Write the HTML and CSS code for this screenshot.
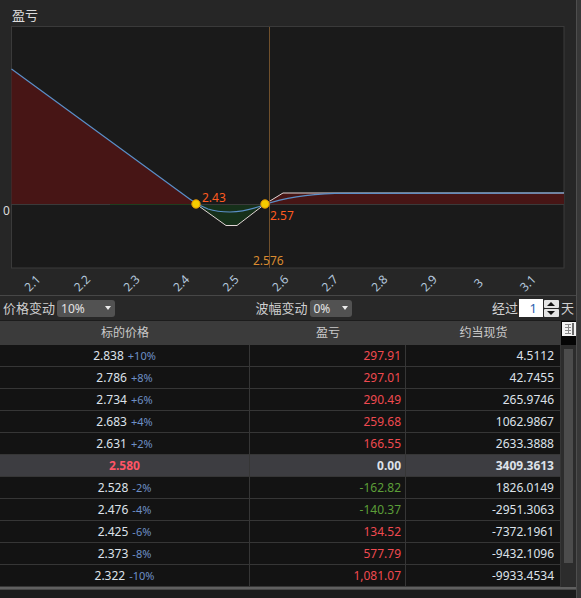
FILE: index.html
```html
<!DOCTYPE html>
<html lang="zh-CN">
<head>
<meta charset="utf-8">
<title>盈亏</title>
<link rel="stylesheet" href="styles.css">
</head>
<body>
<div class="app">
  <section class="chart-panel">
    <div class="chart-title">盈亏</div>
    <svg class="chart" width="576" height="269" viewBox="0 26 576 269" xmlns="http://www.w3.org/2000/svg">
      <rect x="11.5" y="26.5" width="552.5" height="241.5" fill="#1a1a1a" stroke="#3a3a3a" stroke-width="1"/>
      <path d="M11.5,69 L196,204 L11.5,204 Z" fill="#471515"/>
      <path d="M265,204 L283,193 L564,193 L564,204 Z" fill="#471515"/>
      <path d="M196,204 L226,225.5 L237,225.5 L265,204 Z" fill="#16301a"/>
      <line x1="11.5" y1="204.5" x2="564" y2="204.5" stroke="#3a3a3a" stroke-width="1"/>
      <line x1="110" y1="204.5" x2="196" y2="204.5" stroke="#1f3d1f" stroke-width="1"/>
      <path d="M196,204 L226,225.5 L237,225.5 L265,204 L283,193 L564,193" fill="none" stroke="#e2d6d6" stroke-width="1"/>
      <path d="M11.5,69 L190,199.2 C195,203 201,206.5 208,209 C215,211.3 222,212 230,212 C244,211.5 255,208.2 265,204.5 C283,198 303,194.2 335,193.3 L564,193" fill="none" stroke="#5b8fc8" stroke-width="1.2"/>
      <line x1="269.5" y1="27" x2="269.5" y2="268" stroke="#70502c" stroke-width="1"/>
      <circle cx="196" cy="204" r="4.2" fill="#f6cc00" stroke="#e09200" stroke-width="1"/>
      <circle cx="265" cy="204" r="4.2" fill="#f6cc00" stroke="#e09200" stroke-width="1"/>
      <text class="lab-be" x="202" y="202">2.43</text>
      <text class="lab-be" x="270" y="220">2.57</text>
      <text class="lab-cur" x="253" y="265">2.576</text>
      <text class="lab-zero" x="3" y="215">0</text>
      <g class="axis">
        <text x="32.3" y="283" transform="rotate(-45 32.3 283)">2.1</text>
        <text x="81.9" y="283" transform="rotate(-45 81.9 283)">2.2</text>
        <text x="131.4" y="283" transform="rotate(-45 131.4 283)">2.3</text>
        <text x="181" y="283" transform="rotate(-45 181 283)">2.4</text>
        <text x="230.5" y="283" transform="rotate(-45 230.5 283)">2.5</text>
        <text x="280.1" y="283" transform="rotate(-45 280.1 283)">2.6</text>
        <text x="329.6" y="283" transform="rotate(-45 329.6 283)">2.7</text>
        <text x="379.2" y="283" transform="rotate(-45 379.2 283)">2.8</text>
        <text x="428.7" y="283" transform="rotate(-45 428.7 283)">2.9</text>
        <text x="478.3" y="283" transform="rotate(-45 478.3 283)">3</text>
        <text x="527.8" y="283" transform="rotate(-45 527.8 283)">3.1</text>
      </g>
    </svg>
  </section>

  <div class="controls">
    <div class="ctl">
      <span class="lbl">价格变动</span>
      <div class="select"><span>10%</span><i class="caret"></i></div>
    </div>
    <div class="ctl">
      <span class="lbl">波幅变动</span>
      <div class="select narrow"><span>0%</span><i class="caret"></i></div>
    </div>
    <div class="ctl right">
      <span class="lbl">经过</span>
      <div class="spin-input">1</div>
      <div class="spin">
        <div class="spin-btn"><i class="tri-up"></i></div>
        <div class="spin-btn"><i class="tri-down"></i></div>
      </div>
      <span class="lbl day">天</span>
    </div>
  </div>

  <div class="table">
    <div class="grid">
      <div class="thead"><div>标的价格</div><div>盈亏</div><div>约当现货</div></div>
      <div class="row"><div class="c1">2.838<span class="pct">+10%</span></div><div class="c2 red">297.91</div><div class="c3">4.5112</div></div>
      <div class="row"><div class="c1">2.786<span class="pct">+8%</span></div><div class="c2 red">297.01</div><div class="c3">42.7455</div></div>
      <div class="row"><div class="c1">2.734<span class="pct">+6%</span></div><div class="c2 red">290.49</div><div class="c3">265.9746</div></div>
      <div class="row"><div class="c1">2.683<span class="pct">+4%</span></div><div class="c2 red">259.68</div><div class="c3">1062.9867</div></div>
      <div class="row"><div class="c1">2.631<span class="pct">+2%</span></div><div class="c2 red">166.55</div><div class="c3">2633.3888</div></div>
      <div class="row hl"><div class="c1">2.580</div><div class="c2">0.00</div><div class="c3">3409.3613</div></div>
      <div class="row"><div class="c1">2.528<span class="pct">-2%</span></div><div class="c2 green">-162.82</div><div class="c3">1826.0149</div></div>
      <div class="row"><div class="c1">2.476<span class="pct">-4%</span></div><div class="c2 green">-140.37</div><div class="c3">-2951.3063</div></div>
      <div class="row"><div class="c1">2.425<span class="pct">-6%</span></div><div class="c2 red">134.52</div><div class="c3">-7372.1961</div></div>
      <div class="row"><div class="c1">2.373<span class="pct">-8%</span></div><div class="c2 red">577.79</div><div class="c3">-9432.1096</div></div>
      <div class="row"><div class="c1">2.322<span class="pct">-10%</span></div><div class="c2 red">1,081.07</div><div class="c3">-9933.4534</div></div>
    </div>
    <div class="vscroll">
      <div class="corner">
        <svg width="14" height="14" viewBox="0 0 14 14" xmlns="http://www.w3.org/2000/svg">
          <rect x="0" y="0" width="14" height="14" fill="#f2f2f2"/>
          <rect x="10" y="1" width="2" height="12" fill="#6a6a6a"/>
          <rect x="3" y="2" width="6" height="1" fill="#8a8a8a"/>
          <rect x="3" y="5" width="6" height="1" fill="#8a8a8a"/>
          <rect x="3" y="8" width="6" height="1" fill="#8a8a8a"/>
          <rect x="3" y="11" width="6" height="1" fill="#8a8a8a"/>
          <rect x="6" y="2" width="1" height="10" fill="#8a8a8a"/>
        </svg>
      </div>
      <div class="track"><div class="thumb"></div></div>
    </div>
  </div>
  <div class="foot"></div>
  <div class="below"></div>
</div>
</body>
</html>
```

FILE: styles.css
```css
html, body {
  margin: 0;
  padding: 0;
}
body {
  width: 581px;
  height: 598px;
  overflow: hidden;
  background: #383838;
  font-family: "Noto Sans", "Noto Sans CJK SC", sans-serif;
}
.app {
  width: 576px;
  border-right: 1px solid #4e4e4e;
  background: #262626;
}
.chart-panel {
  height: 295px;
  border-bottom: 1px solid #474747;
}
.chart-title {
  height: 26px;
  box-sizing: border-box;
  padding: 3px 0 0 12px;
  font-size: 13px;
  line-height: 24px;
  color: #dcdcdc;
}
.chart {
  display: block;
}
.chart text {
  font-family: "Noto Sans", "Noto Sans CJK SC", sans-serif;
  font-size: 12px;
}
.lab-be { fill: #ff5a20; }
.lab-cur { fill: #d98b30; }
.lab-zero { fill: #dcdcdc; }
.axis text {
  fill: #b4c8de;
  text-anchor: middle;
  dominant-baseline: central;
}

.controls {
  height: 24px;
  display: flex;
  align-items: center;
  justify-content: space-between;
  padding: 0 2px 0 3px;
  border-bottom: 1px solid #1c1c1c;
  background: #282828;
}
.ctl {
  display: flex;
  align-items: center;
  gap: 2px;
}
.ctl.right { gap: 1px; }
.lbl {
  font-size: 13px;
  color: #cfcfcf;
  line-height: 18px;
}
.day { margin-left: 1px; }
.select {
  width: 58px;
  height: 17px;
  box-sizing: border-box;
  background: #525252;
  border-radius: 3px;
  display: flex;
  align-items: center;
  justify-content: space-between;
  padding: 0 4px;
  font-size: 12px;
  color: #e2e2e2;
}
.select.narrow { width: 42px; }
.caret {
  width: 0;
  height: 0;
  border-left: 3.5px solid transparent;
  border-right: 3.5px solid transparent;
  border-top: 4px solid #ececec;
}
.spin-input {
  width: 24px;
  height: 18px;
  box-sizing: border-box;
  background: #ffffff;
  color: #2a5fb0;
  font-size: 13px;
  line-height: 18px;
  text-align: right;
  padding-right: 6px;
}
.spin {
  width: 15px;
  height: 17px;
  display: flex;
  flex-direction: column;
  gap: 1px;
}
.spin-btn {
  flex: 1;
  background: #e4e4e4;
  border-radius: 1px;
  display: flex;
  align-items: center;
  justify-content: center;
}
.tri-up {
  width: 0; height: 0;
  border-left: 4px solid transparent;
  border-right: 4px solid transparent;
  border-bottom: 4px solid #111;
}
.tri-down {
  width: 0; height: 0;
  border-left: 4px solid transparent;
  border-right: 4px solid transparent;
  border-top: 4px solid #111;
}

.table {
  display: flex;
  background: #131313;
}
.grid {
  width: 561px;
}
.thead {
  display: grid;
  grid-template-columns: 250px 156px 155px;
  height: 24px;
  background: #3b3b3b;
}
.thead div {
  text-align: center;
  line-height: 24px;
  font-size: 12px;
  color: #cacaca;
}
.row {
  display: grid;
  grid-template-columns: 250px 156px 155px;
  height: 21px;
  border-bottom: 1px solid #363636;
  background: #131313;
  font-size: 12px;
  line-height: 22px;
  color: #dde2ea;
}
.row > div {
  border-right: 1px solid #363636;
  white-space: nowrap;
}
.c1 { text-align: center; }
.pct {
  font-size: 11px;
  color: #6d8fc6;
  margin-left: 4px;
}
.c2 { text-align: right; padding-right: 4px; }
.c3 { text-align: right; padding-right: 6px; }
.red { color: #f04a50; }
.green { color: #5c9e38; }
.row.hl {
  background: #3d3d41;
  font-weight: bold;
}
.row.hl .c1 { color: #ff5566; }

.vscroll {
  width: 15px;
  display: flex;
  flex-direction: column;
}
.corner {
  height: 24px;
  box-sizing: border-box;
  padding: 1px 0 0 1px;
  background: #050505;
}
.corner svg { display: block; }
.track {
  flex: 1;
  background: #2c2c2c;
  padding: 4px 3px 0 3px;
}
.thumb {
  height: 214px;
  background: #4c4c4c;
}
.foot {
  height: 3px;
  background: linear-gradient(#606060 0, #606060 2px, #474747 2px);
}
.below {
  height: 8px;
  background: #1c1c1c;
}
```
